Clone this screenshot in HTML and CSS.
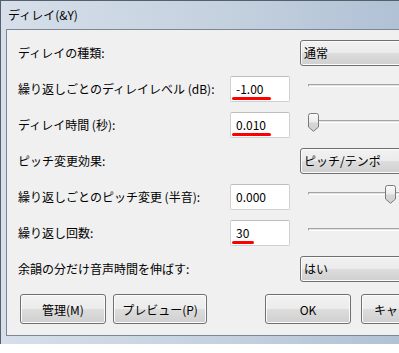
FILE: index.html
```html
<!DOCTYPE html>
<html>
<head>
  <meta charset="UTF-8">
  <title>ディレイ</title>
  <link rel="stylesheet" href="styles.css">
</head>
<body>
  <div class="window">
    <div class="titlebar">ディレイ(&amp;Y)</div>
    <div class="client">
      <div class="row">
        <span class="label">ディレイの種類:</span>
        <div class="combo">通常</div>
      </div>
      <div class="row">
        <span class="label">繰り返しごとのディレイレベル (dB):</span>
        <div class="field">-1.00<span class="mark"></span></div>
        <div class="slider"><div class="track"></div></div>
      </div>
      <div class="row">
        <span class="label">ディレイ時間 (秒):</span>
        <div class="field">0.010<span class="mark"></span></div>
        <div class="slider">
          <div class="track"></div>
          <svg class="thumb" style="left: 0px" width="11" height="19" viewBox="0 0 11 19">
            <defs>
              <linearGradient id="tg1" x1="0" y1="0" x2="0" y2="1">
                <stop offset="0" stop-color="#fbfbfb"/>
                <stop offset="0.45" stop-color="#ececec"/>
                <stop offset="0.55" stop-color="#d6d6d6"/>
                <stop offset="1" stop-color="#d0d0d0"/>
              </linearGradient>
            </defs>
            <path d="M0.5,2.5 Q0.5,0.5 2.5,0.5 H8.5 Q10.5,0.5 10.5,2.5 V14 L5.5,18.3 L0.5,14 Z" fill="url(#tg1)" stroke="#7a7a7a"/>
          </svg>
        </div>
      </div>
      <div class="row">
        <span class="label">ピッチ変更効果:</span>
        <div class="combo">ピッチ/テンポ</div>
      </div>
      <div class="row">
        <span class="label">繰り返しごとのピッチ変更 (半音):</span>
        <div class="field">0.000</div>
        <div class="slider">
          <div class="track"></div>
          <svg class="thumb" style="left: 77px" width="11" height="19" viewBox="0 0 11 19">
            <defs>
              <linearGradient id="tg2" x1="0" y1="0" x2="0" y2="1">
                <stop offset="0" stop-color="#fbfbfb"/>
                <stop offset="0.45" stop-color="#ececec"/>
                <stop offset="0.55" stop-color="#d6d6d6"/>
                <stop offset="1" stop-color="#d0d0d0"/>
              </linearGradient>
            </defs>
            <path d="M0.5,2.5 Q0.5,0.5 2.5,0.5 H8.5 Q10.5,0.5 10.5,2.5 V14 L5.5,18.3 L0.5,14 Z" fill="url(#tg2)" stroke="#7a7a7a"/>
          </svg>
        </div>
      </div>
      <div class="row">
        <span class="label">繰り返し回数:</span>
        <div class="field">30<span class="mark short"></span></div>
        <div class="slider"><div class="track"></div></div>
      </div>
      <div class="row">
        <span class="label">余韻の分だけ音声時間を伸ばす:</span>
        <div class="combo">はい</div>
      </div>
      <div class="buttons">
        <button class="btn">管理(M)</button>
        <button class="btn wide">プレビュー(P)</button>
        <button class="btn ok">OK</button>
        <button class="btn">キャンセル</button>
      </div>
    </div>
  </div>
</body>
</html>
```
FILE: styles.css
```css
body {
  margin: 0;
  width: 399px;
  height: 353px;
  overflow: hidden;
  font-family: "Noto Sans CJK JP", "Liberation Sans", sans-serif;
  font-size: 12px;
  color: #000;
}

.window {
  width: 470px;
  border-top: 1px solid #56606b;
  border-left: 1px solid #56606b;
  background: linear-gradient(to right, #d6dfea, #c3d0de 50%, #a8bbd1);
  padding-bottom: 8px;
}

.titlebar {
  height: 28px;
  line-height: 27px;
  padding-left: 7px;
  font-size: 12px;
}

.client {
  margin-left: 5px;
  border: 1px solid #7d8793;
  background-color: #f0f0f0;
  padding: 10px 0 11px 11px;
}

.row {
  display: grid;
  grid-template-columns: 212px 60px 1fr;
  height: 26px;
  margin-bottom: 10px;
  align-items: center;
}

.label {
  grid-column: 1;
  white-space: nowrap;
  line-height: 26px;
}

.combo {
  grid-column: 3;
  margin-left: 10px;
  width: 150px;
  height: 24px;
  line-height: 23px;
  padding-left: 3px;
  border: 1px solid #707070;
  border-radius: 3px;
  background: linear-gradient(#f2f2f2, #ebebeb 50%, #dddddd 50%, #cfcfcf);
  box-shadow: inset 0 0 0 1px #fbfbfb;
}

.field {
  grid-column: 2;
  position: relative;
  height: 24px;
  line-height: 24px;
  padding-left: 5px;
  background-color: #fff;
  border: 1px solid #d0d0d0;
  border-top-color: #bdbdbd;
  border-radius: 2px;
}

.mark {
  position: absolute;
  left: 1px;
  top: 20px;
  width: 39px;
  height: 3px;
  border-radius: 2px;
  background-color: #ff0000;
}

.mark.short {
  width: 22px;
}

.slider {
  grid-column: 3;
  position: relative;
  margin-left: 18px;
  height: 26px;
}

.track {
  position: absolute;
  left: 0;
  right: 0;
  top: 8px;
  height: 1px;
  border-top: 1px solid #a4a4a4;
  border-left: 1px solid #a4a4a4;
  border-bottom: 1px solid #ffffff;
  background-color: #e3e3e3;
}

.thumb {
  position: absolute;
  top: 1px;
  display: block;
}

.buttons {
  display: flex;
  margin-top: 12px;
  margin-left: 2px;
}

.btn {
  width: 86px;
  height: 30px;
  margin-right: 7px;
  padding: 0;
  font-family: "Noto Sans CJK JP", "Liberation Sans", sans-serif;
  font-size: 12px;
  color: #000;
  border: 1px solid #707070;
  border-radius: 3px;
  background: linear-gradient(#f2f2f2, #ebebeb 50%, #dddddd 50%, #cfcfcf);
  box-shadow: inset 0 0 0 1px #fbfbfb;
  flex-shrink: 0;
}

.btn.wide {
  width: 94px;
  margin-right: 58px;
}

.btn.ok {
  margin-right: 10px;
}
```
